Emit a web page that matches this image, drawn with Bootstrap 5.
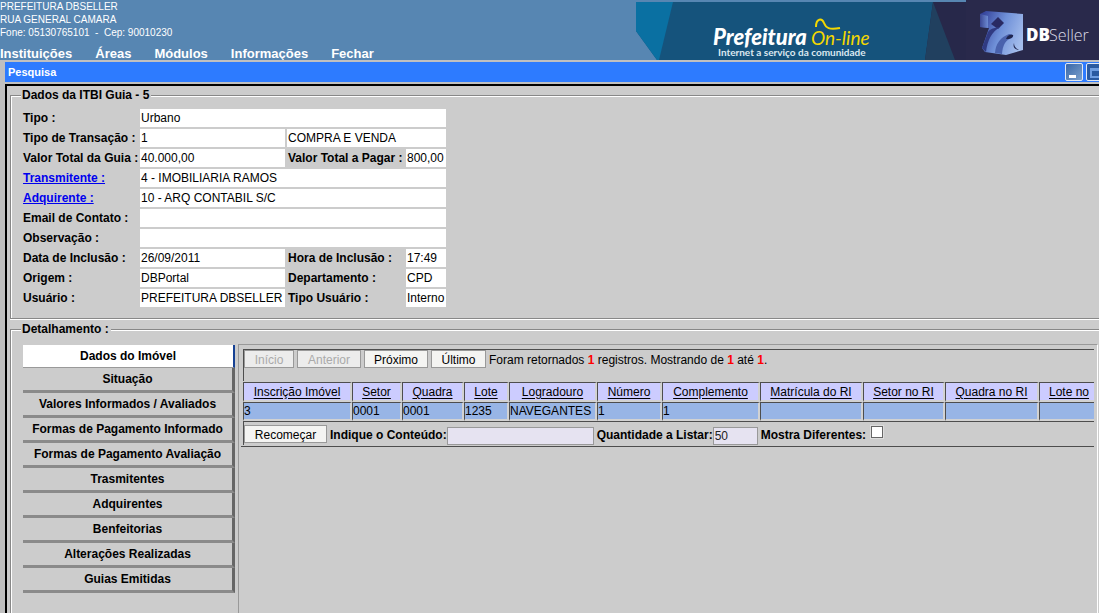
<!DOCTYPE html>
<html lang="pt-BR">
<head>
<meta charset="utf-8">
<meta name="viewport" content="width=device-width, initial-scale=1">
<title>Pesquisa - DBPortal</title>
<link href="https://cdn.jsdelivr.net/npm/bootstrap@5.3.0/dist/css/bootstrap.min.css" rel="stylesheet">
<style>
  body { font: 12px/14px "Liberation Sans", Arial, sans-serif; color: #000; background: #ccc; overflow: hidden; }
  .app-header { background: #5786b2; color: #fff; height: 60px; }
  .org-info { font-size: 10px; line-height: 13px; }
  .main-menu { font-size: 13px; line-height: 13px; gap: 23px; }
  .main-menu a { color: #fff; }
  .window { background: #c0c0c0; padding: 2px 0 0 5px; }
  .window-title { background: #2d7bff; color: #fff; height: 20px; padding-left: 3px; font-size: 11px; }
  .win-btns { gap: 3px; margin-right: -5px; }
  .win-btn { width: 18px; height: 18px; border: 1px solid #dfe8f4; border-radius: 2px; background: linear-gradient(135deg, #3a68a8, #7ba0cc); }
  .win-btn.max { background: #2a5aa0; }
  .window-body { margin-top: 2px; border: solid #000; border-width: 2px 0 0 2px; background: #ccc; padding: 3px 0 0 3px; min-height: calc(100vh - 84px); }
  .group { border: 1px solid #888; border-right: 0; box-shadow: inset 1px 1px 0 #fff, 0 1px 0 #fff; padding: 0 0 0 12px; }
  .group > legend { float: none; width: auto; margin: 0 0 0 -2px; padding: 0 2px 0 1px; font-size: 12px; font-weight: bold; line-height: 12px; background: #ccc; }
  .itbi { border-collapse: separate; border-spacing: 0 2px; margin: 6px 0 9px; }
  .itbi th, .itbi td { height: 18px; padding: 0 1px; font-size: 12px; white-space: nowrap; }
  .itbi th:first-child { padding: 0; }
  .itbi td { background: #fff; }
  .itbi a { color: #00e; }
  .itbi .gap-r { border-right: 2px solid #ccc; }
  .details { padding-top: 9px; }
  .side-tabs { width: 212px; padding-top: 1px; }
  .side-tabs a { display: block; height: 25px; line-height: 22px; font-weight: bold; text-align: center; color: #000; text-decoration: none; border: solid; border-color: #ccc #666 #8a8a8a #ccc; border-width: 0 3px 3px 0; }
  .side-tabs a.active { height: 23px; background: #fff; border-width: 0 2px 1px 0; border-color: #999 #164194 #999 #999; }
  .results { border: solid #999; border-width: 1px 1px 0 1px; border-right-color: #fff; padding: 4px 3px 0 2px; min-height: 290px; min-width: 0; margin: 0 1px 0 3px; overflow: hidden; }
  .clip { overflow: hidden; border-bottom: 1px solid #4d4d4d; padding: 0 0 1px 2px; }
  .strip { border: solid #4d4d4d; border-width: 1px 0 0 1px; white-space: nowrap; gap: 3px; }
  .nav-strip { height: 32px; margin-bottom: 1px; }
  .foot-strip { height: 24px; padding-top: 3px; }
  .strip .msg, .strip label { line-height: 20px; }
  .hit { color: #f00; }
  .old-btn { line-height: 14px; height: 18px; padding: 1px 0 0; border: 1px solid #999; background: #f4f4f2; color: #000; }
  .old-btn:disabled { color: #aaa; background: #ececec; }
  .btn-s { width: 50px; } .btn-m { width: 55px; } .btn-l { width: 64px; } .btn-xl { width: 83px; }
  .grid { border-collapse: separate; border-spacing: 0; table-layout: fixed; width: 872px; }
  .grid th, .grid td { border: solid #4d4d4d; border-width: 1px 2px 0 1px; border-right-color: #d2d2d2; padding: 0; white-space: nowrap; overflow: hidden; }
  .grid th { background: #ccf; height: 20px; border-bottom: 2px solid #d2d2d2; font-weight: normal; text-align: center; }
  .grid th:last-child { text-align: left; padding-left: 9px; }
  .grid th a { color: #000; text-underline-offset: 2px; }
  .grid td { background: #98b5e6; height: 19px; border-bottom: 2px solid #d2d2d2; }
  .old-input { height: 18px; margin-top: 2px; border: 1px solid #999; background: #e6e3f1; padding: 0 1px; color: #222; border-radius: 0; }
  .field { display: flex; }
  #conteudo { width: 147px; }
  #qtd { width: 45px; }
  .old-check { width: 12px; height: 12px; margin: 1px 0 0 5px; appearance: none; background: #fff; border: 1px solid #666; outline: 1px solid #ddd; }
</style>
</head>
<body>
<header class="app-header d-flex justify-content-between overflow-hidden">
  <div class="d-flex flex-column justify-content-between text-nowrap">
    <div class="org-info">PREFEITURA DBSELLER<br>RUA GENERAL CAMARA<br>Fone: 05130765101 &nbsp;- &nbsp;Cep: 90010230</div>
    <nav class="main-menu d-flex fw-bold">
      <a class="text-decoration-none" href="#">Instituições</a>
      <a class="text-decoration-none" href="#">Áreas</a>
      <a class="text-decoration-none" href="#">Módulos</a>
      <a class="text-decoration-none" href="#">Informações</a>
      <a class="text-decoration-none" href="#">Fechar</a>
    </nav>
  </div>
  <svg class="flex-shrink-0" width="463" height="60" viewBox="0 0 463 60" role="img" aria-label="Prefeitura On-line, DBSeller">
    <defs>
      <linearGradient id="cube" x1="0" y1=".2" x2="1" y2=".6"><stop offset="0" stop-color="#34429a"/><stop offset=".5" stop-color="#6f90d8"/><stop offset="1" stop-color="#a4bdec"/></linearGradient>
      <linearGradient id="side" x1="0" y1="0" x2="1" y2="0"><stop offset="0" stop-color="#3b4793"/><stop offset="1" stop-color="#6c8ad2"/></linearGradient>
    </defs>
    <path d="M0 2H330V60H21L0 31Z" fill="#15537c"/>
    <path d="M0 2H37L23 60H21L0 31Z" fill="#0a70a2"/>
    <path d="M297 2H463V60H289Z" fill="#27284a"/>
    <path d="M297 2L319 60H289Z" fill="#21405f"/>
    <path d="M330 0H463V60H330Z" fill="#29294b"/>
    <path d="M344 14L350 11L387 14V50L370 55L349 52L346 48L353 28L344 27Z" fill="url(#cube)"/>
    <path d="M344 14L352 16V28L344 27Z" fill="url(#side)"/>
    <path d="M362 17L368 23L362 29L355 24Z" fill="#292a63"/>
    <path d="M346 48L352 32Q354 28 364 27Q352 34 350 52Z" fill="#303a82"/>
    <path d="M359 53Q360 39 373 34Q379 34 376 38Q367 40 366 54Z" fill="#4a62ad"/>
    <path d="M370 39Q372 34 377 35Q378 37 373 39ZM378 43Q376 49 383 50Q378 48 378 43Z" fill="#20264f"/>
    <text x="77" y="45" font-family="Lato" font-size="22" font-weight="900" font-style="italic" fill="#fff">Prefeitura</text>
    <text x="175" y="45" font-family="Lato" font-size="19" font-style="italic" fill="#f4d800">On-line</text>
    <path d="M180 27C180 18 186 18 188 23S193 30 204 28" fill="none" stroke="#f4d800" stroke-width="2"/>
    <text x="82" y="56" font-family="Lato" font-size="10" font-weight="bold" fill="#dce8f0">Internet a serviço da comunidade</text>
    <text x="390" y="41" font-family="Open Sans" font-size="17" font-weight="800" fill="#fff">DB</text>
    <text x="413" y="41" font-family="Open Sans" font-size="16" font-weight="300" fill="#dcdce8">Seller</text>
  </svg>
</header>

<main class="window">
  <div class="window-title d-flex align-items-center justify-content-between">
    <strong>Pesquisa</strong>
    <div class="win-btns d-flex">
      <button class="win-btn p-0 d-flex" type="button" aria-label="Minimizar"><svg width="16" height="16"><path d="M3 11h7v3H3z" fill="#fff"/></svg></button>
      <button class="win-btn max p-0 d-flex" type="button" aria-label="Maximizar"><svg width="16" height="16"><path d="M4 5h9v8H4zM4 6h9" fill="none" stroke="#6e9de0" stroke-width="2"/></svg></button>
    </div>
  </div>
  <div class="window-body">
    <fieldset class="group">
      <legend>Dados da ITBI Guia - 5</legend>
      <table class="itbi">
        <colgroup><col style="width:117px"><col style="width:147px"><col style="width:119px"><col style="width:40px"></colgroup>
        <tr><th>Tipo :</th><td colspan="3">Urbano</td></tr>
        <tr><th>Tipo de Transação :</th><td class="gap-r">1</td><td colspan="2">COMPRA E VENDA</td></tr>
        <tr><th>Valor Total da Guia :</th><td class="gap-r">40.000,00</td><th>Valor Total a Pagar :</th><td>800,00</td></tr>
        <tr><th><a href="#">Transmitente :</a></th><td colspan="3">4 - IMOBILIARIA RAMOS</td></tr>
        <tr><th><a href="#">Adquirente :</a></th><td colspan="3">10 - ARQ CONTABIL S/C</td></tr>
        <tr><th>Email de Contato :</th><td colspan="3"></td></tr>
        <tr><th>Observação :</th><td colspan="3"></td></tr>
        <tr><th>Data de Inclusão :</th><td class="gap-r">26/09/2011</td><th>Hora de Inclusão :</th><td>17:49</td></tr>
        <tr><th>Origem :</th><td class="gap-r">DBPortal</td><th>Departamento :</th><td>CPD</td></tr>
        <tr><th>Usuário :</th><td class="gap-r">PREFEITURA DBSELLER</td><th>Tipo Usuário :</th><td>Interno</td></tr>
      </table>
    </fieldset>
    <fieldset class="group mt-1">
      <legend>Detalhamento :</legend>
      <div class="details d-flex">
        <nav class="side-tabs flex-shrink-0">
          <a class="active" href="#">Dados do Imóvel</a>
          <a href="#">Situação</a>
          <a href="#">Valores Informados / Avaliados</a>
          <a href="#">Formas de Pagamento Informado</a>
          <a href="#">Formas de Pagamento Avaliação</a>
          <a href="#">Trasmitentes</a>
          <a href="#">Adquirentes</a>
          <a href="#">Benfeitorias</a>
          <a href="#">Alterações Realizadas</a>
          <a href="#">Guias Emitidas</a>
        </nav>
        <section class="results flex-grow-1">
          <div class="clip">
            <div class="strip nav-strip d-flex align-items-start">
              <button class="old-btn btn-s" type="button" disabled>Início</button>
              <button class="old-btn btn-l" type="button" disabled>Anterior</button>
              <button class="old-btn btn-l" type="button">Próximo</button>
              <button class="old-btn btn-m" type="button">Último</button>
              <span class="msg">Foram retornados <b class="hit">1</b> registros. Mostrando de <b class="hit">1</b> até <b class="hit">1</b>.</span>
            </div>
            <table class="grid">
              <colgroup><col style="width:109px"><col style="width:50px"><col style="width:62px"><col style="width:45px"><col style="width:88px"><col style="width:65px"><col style="width:98px"><col style="width:103px"><col style="width:82px"><col style="width:94px"><col style="width:76px"></colgroup>
              <thead><tr><th><a href="#">Inscrição Imóvel</a></th><th><a href="#">Setor</a></th><th><a href="#">Quadra</a></th><th><a href="#">Lote</a></th><th><a href="#">Logradouro</a></th><th><a href="#">Número</a></th><th><a href="#">Complemento</a></th><th><a href="#">Matrícula do RI</a></th><th><a href="#">Setor no RI</a></th><th><a href="#">Quadra no RI</a></th><th><a href="#">Lote no</a></th></tr></thead>
              <tbody><tr><td>3</td><td>0001</td><td>0001</td><td>1235</td><td>NAVEGANTES</td><td>1</td><td>1</td><td></td><td></td><td></td><td></td></tr></tbody>
            </table>
            <div class="strip foot-strip d-flex align-items-start fw-bold">
              <button class="old-btn btn-xl" type="button">Recomeçar</button>
              <div class="field"><label for="conteudo">Indique o Conteúdo:</label><input class="old-input" id="conteudo" type="text"></div>
              <div class="field"><label for="qtd">Quantidade a Listar:</label><input class="old-input" id="qtd" type="text" value="50"></div>
              <div class="field"><label for="dif">Mostra Diferentes:</label><input class="old-check" id="dif" type="checkbox"></div>
            </div>
          </div>
        </section>
      </div>
    </fieldset>
  </div>
</main>
<script src="https://cdn.jsdelivr.net/npm/bootstrap@5.3.0/dist/js/bootstrap.bundle.min.js"></script>
</body>
</html>
